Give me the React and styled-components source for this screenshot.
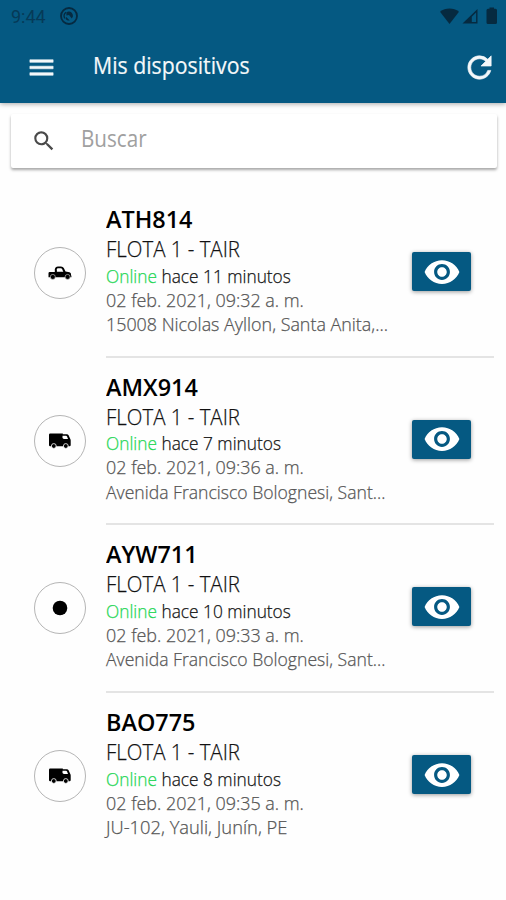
import React from 'react';
import styled, { createGlobalStyle } from 'styled-components';
import { MdMenu, MdRefresh, MdSearch, MdVisibility } from 'react-icons/md';

const colors = {
  primary: '#055982',
  status: '#062a40',
  online: '#1fd655',
  muted: '#555',
};

const GlobalStyle = createGlobalStyle`
  * {
    box-sizing: border-box;
  }
  body {
    margin: 0;
    background-color: #fefefe;
    font-family: 'Open Sans', 'Noto Sans', sans-serif;
  }
`;

const Screen = styled.div`
  width: 506px;
  height: 900px;
  overflow: hidden;
`;

const Header = styled.header`
  height: 103px;
  background-color: ${colors.primary};
  box-shadow: 0 1px 5px rgba(0, 0, 0, 0.35);
`;

const StatusBar = styled.div`
  display: flex;
  align-items: center;
  justify-content: space-between;
  height: 32px;
  padding: 0 8px 0 11px;
  color: ${colors.status};
`;

const StatusGroup = styled.div`
  display: flex;
  align-items: center;
  svg {
    display: block;
  }
`;

const Clock = styled.span`
  width: 48px;
  font-family: Roboto, sans-serif;
  font-size: 18px;
  line-height: 32px;
  padding-top: 1px;
  color: #063a57;
`;

const Toolbar = styled.div`
  display: flex;
  align-items: center;
  height: 71px;
  padding: 0 9px 0 26px;
  color: #f4f8fa;
  & > svg path:last-child {
    stroke: currentColor;
    stroke-width: 0.45;
  }
`;

const Label = styled.span`
  display: block;
  white-space: pre;
  transform: scaleX(${(props) => props.$scale || 1});
  transform-origin: left center;
`;

const Title = styled.h1`
  flex: 1;
  width: 0;
  margin: 0 0 6px 36px;
  font-size: 24px;
  font-weight: 400;
  line-height: 32px;
  -webkit-text-stroke: 0.2px currentColor;
`;

const SearchBox = styled.div`
  display: flex;
  align-items: center;
  height: 54px;
  margin: 11px 9px 0 11px;
  padding-left: 20px;
  background-color: #fff;
  border-radius: 2px;
  box-shadow: 0 2px 3px rgba(0, 0, 0, 0.35);
  color: #4a4a4a;
`;

const Placeholder = styled.div`
  margin: 0 0 6px 24px;
  width: 200px;
  font-size: 24px;
  font-weight: 400;
  line-height: 32px;
  color: #a0a0a0;
`;

const List = styled.ul`
  margin: 0;
  padding: 22px 12px 0 34px;
  list-style: none;
`;

const Item = styled.li`
  display: flex;
  height: 167.7px;
`;

const Avatar = styled.div`
  display: flex;
  align-items: center;
  justify-content: center;
  flex: none;
  width: 52px;
  height: 52px;
  margin: 57px 20px 0 0;
  border: 1px solid #b5b5b5;
  border-radius: 50%;
  color: #000;
`;

const Content = styled.div`
  display: flex;
  flex: 1;
  min-width: 0;
  border-bottom: 2px solid ${(props) => (props.$last ? 'transparent' : '#e4e4e4')};
`;

const Info = styled.div`
  width: 306px;
  padding-top: 14px;
  font-size: 19px;
  font-weight: 300;
  line-height: 24.2px;
  color: ${colors.muted};
  -webkit-text-stroke: 0.25px currentColor;
`;

const Plate = styled.div`
  font-size: 23px;
  font-weight: 600;
  line-height: 30px;
  color: #000;
  -webkit-text-stroke: 0;
`;

const Fleet = styled.div`
  font-size: 22px;
  line-height: 29.6px;
  color: #111;
`;

const LastSeen = styled.div`
  color: #111;
  em {
    font-style: normal;
    color: ${colors.online};
  }
`;

const ViewButton = styled.button`
  display: flex;
  align-items: center;
  justify-content: center;
  width: 59px;
  height: 39px;
  margin-top: 62px;
  padding: 0;
  border: 0;
  border-radius: 2px;
  background-color: ${colors.primary};
  box-shadow: 0 1px 4px rgba(0, 0, 0, 0.4);
  color: #fff;
`;

function SyncOffIcon() {
  return (
    <svg width="20" height="20" viewBox="0 0 20 20" fill="none">
      <circle cx="10" cy="10" r="8" stroke="currentColor" strokeWidth="1.8" />
      <path d="M5.800 12.400A4.900 4.900 0 0 1 7 6.200" stroke="currentColor" strokeWidth="1.300" />
      <path d="M7.500 6.200c3-1.800 6.500.2 6.500 4l-1.200 2.200-2.800-3.400-2.600.4zM7.200 11l3.600 3.400c-1.800.6-3.500-.4-4.200-2z" fill="currentColor" />
    </svg>
  );
}

function SignalIcons() {
  return (
    <svg width="60" height="20" viewBox="0 0 60 20" fill="currentColor">
      <path d="M2 5.800C7.500 1.400 15.500 1.400 21 5.800L11.500 18z" />
      <path d="M24.500 17.500 39.500 3v14.500z" />
      <path d="M33.800 10.700l4.300-4.300v9.700h-4.300z" fill={colors.primary} />
      <path d="M51.500 2.800V1.500h4.500v1.300h1.500q1.500 0 1.500 1.500V16.500q0 1.500-1.500 1.500h-7.500q-1.500 0-1.500-1.500V4.300q0-1.500 1.500-1.500z" />
    </svg>
  );
}

function PickupIcon() {
  return (
    <svg width="24" height="16" viewBox="0 0 24 16">
      <path
        d="M.5 8.200q0-1.200 1.200-1.200H6.800V4.300Q7.200 1.400 10 1.400h3q2 0 2.800 1.500l1.700 3.700 4 .7q1.500.4 1.500 1.700v1.500h.4v1.800H.5z"
        fill="currentColor"
      />
      <path d="M8.900 6.700V4.200q.1-.9 1-.9h3q.8 0 1.200.8l1.200 2.600z" fill="#fff" />
      <circle cx="4.800" cy="11.900" r="2.500" fill="currentColor" stroke="#fff" strokeWidth=".5" />
      <circle cx="19.600" cy="11.900" r="2.500" fill="currentColor" stroke="#fff" strokeWidth=".5" />
    </svg>
  );
}

function VanIcon() {
  return (
    <svg width="24" height="16" viewBox="0 0 24 16">
      <path
        d="M1 1.700q0-1.200 1.200-1.200h12.600v.8h4q1.300 0 1.800 1l1.800 4q.3.600.3 1.200v4.500q0 1.200-1.200 1.200H2.200Q1 13.200 1 12z"
        fill="currentColor"
      />
      <path d="M14.500 2.800h3.500q.7 0 1 .6l1 2.500h-4q-1.500 0-1.500-1.300z" fill="#fff" />
      <circle cx="5.800" cy="13" r="2.400" fill="currentColor" stroke="#fff" strokeWidth=".8" />
      <circle cx="17.800" cy="13" r="2.400" fill="currentColor" stroke="#fff" strokeWidth=".8" />
    </svg>
  );
}

function DotIcon() {
  return (
    <svg width="16" height="16" viewBox="0 0 16 16">
      <circle cx="8" cy="8" r="7.300" fill="currentColor" />
    </svg>
  );
}

const icons = { pickup: PickupIcon, van: VanIcon, dot: DotIcon };

const devices = [
  {
    plate: 'ATH814',
    icon: 'pickup',
    ago: 'hace 11 minutos',
    date: '02 feb. 2021, 09:32 a. m.',
    address: '15008 Nicolas Ayllon, Santa Anita,...',
    addressScale: 0.941,
  },
  {
    plate: 'AMX914',
    icon: 'van',
    ago: 'hace 7 minutos',
    date: '02 feb. 2021, 09:36 a. m.',
    address: 'Avenida Francisco Bolognesi, Sant...',
    addressScale: 0.926,
  },
  {
    plate: 'AYW711',
    icon: 'dot',
    ago: 'hace 10 minutos',
    date: '02 feb. 2021, 09:33 a. m.',
    address: 'Avenida Francisco Bolognesi, Sant...',
    addressScale: 0.926,
  },
  {
    plate: 'BAO775',
    icon: 'van',
    ago: 'hace 8 minutos',
    date: '02 feb. 2021, 09:35 a. m.',
    address: 'JU-102, Yauli, Junín, PE',
    addressScale: 0.964,
  },
];

function DeviceItem({ device, last }) {
  const Icon = icons[device.icon];

  return (
    <Item>
      <Avatar>
        <Icon />
      </Avatar>
      <Content $last={last}>
        <Info>
          <Plate>
            <Label $scale={1.018}>{device.plate}</Label>
          </Plate>
          <Fleet>
            <Label $scale={0.93}>FLOTA 1 - TAIR</Label>
          </Fleet>
          <LastSeen>
            <Label $scale={0.91}>
              <em>Online</em> {device.ago}
            </Label>
          </LastSeen>
          <Label $scale={0.944}>{device.date}</Label>
          <Label $scale={device.addressScale}>{device.address}</Label>
        </Info>
        <ViewButton>
          <MdVisibility size={38} />
        </ViewButton>
      </Content>
    </Item>
  );
}

function App() {
  return (
    <Screen>
      <GlobalStyle />
      <Header>
        <StatusBar>
          <StatusGroup>
            <Clock>9:44</Clock>
            <SyncOffIcon />
          </StatusGroup>
          <SignalIcons />
        </StatusBar>
        <Toolbar>
          <MdMenu size={31} />
          <Title>
            <Label $scale={0.887}>Mis dispositivos</Label>
          </Title>
          <MdRefresh size={35} />
        </Toolbar>
      </Header>
      <SearchBox>
        <MdSearch size={26} />
        <Placeholder>
          <Label $scale={0.86}>Buscar</Label>
        </Placeholder>
      </SearchBox>
      <List>
        {devices.map((device, index) => (
          <DeviceItem
            key={device.plate}
            device={device}
            last={index === devices.length - 1}
          />
        ))}
      </List>
    </Screen>
  );
}

export default App;
